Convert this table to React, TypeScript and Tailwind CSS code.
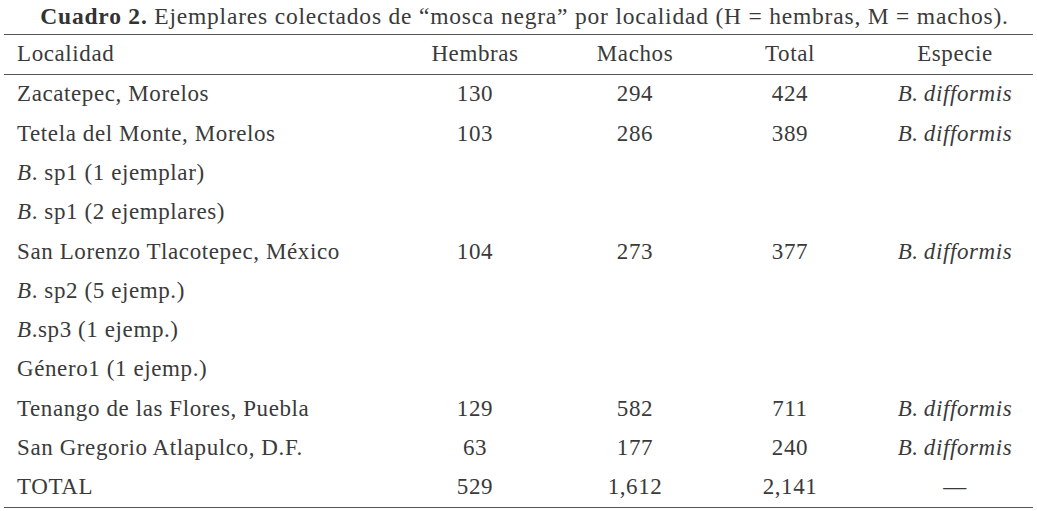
import React from 'react';

type Row = {
  loc: React.ReactNode;
  h?: string;
  m?: string;
  t?: string;
  sp?: React.ReactNode;
};

const Dif = () => <i>B.&thinsp;difformis</i>;

const rows: Row[] = [
  { loc: 'Zacatepec, Morelos', h: '130', m: '294', t: '424', sp: <Dif /> },
  { loc: 'Tetela del Monte, Morelos', h: '103', m: '286', t: '389', sp: <Dif /> },
  { loc: <><i>B</i>. sp1 (1 ejemplar)</> },
  { loc: <><i>B</i>. sp1 (2 ejemplares)</> },
  { loc: 'San Lorenzo Tlacotepec, México', h: '104', m: '273', t: '377', sp: <Dif /> },
  { loc: <><i>B</i>. sp2 (5 ejemp.)</> },
  { loc: <><i>B</i>.sp3 (1 ejemp.)</> },
  { loc: 'Género1 (1 ejemp.)' },
  { loc: 'Tenango de las Flores, Puebla', h: '129', m: '582', t: '711', sp: <Dif /> },
  { loc: 'San Gregorio Atlapulco, D.F.', h: '63', m: '177', t: '240', sp: <Dif /> },
  { loc: 'TOTAL', h: '529', m: '1,612', t: '2,141', sp: '—' },
];

const cols = 'grid grid-cols-[379px_184px_136px_174px_156px] items-center';

export default function App() {
  return (
    <div className="w-[1037px] h-[511px] bg-white text-[#3a3a3a] font-[family-name:'Liberation_Serif',serif] text-[23px] tracking-[0.6px] overflow-hidden">
      <div className="h-[34px] flex items-center justify-center pl-[12px] leading-none text-[23.5px] tracking-[0.8px] whitespace-nowrap">
        <span>
          <b className="text-[#333]">Cuadro 2.</b> Ejemplares colectados de “mosca negra” por localidad (H = hembras, M = machos).
        </span>
      </div>
      <div className="mx-[4px] w-[1029px] border-t border-b border-[#555]">
        <div className={`${cols} h-[40px] border-b border-[#555]`}>
          <div className="pl-[13px]">Localidad</div>
          <div className="text-center">Hembras</div>
          <div className="text-center">Machos</div>
          <div className="text-center">Total</div>
          <div className="text-center">Especie</div>
        </div>
        {rows.map((r, i) => (
          <div key={i} className={`${cols} h-[39.3px]`}>
            <div className="pl-[13px] whitespace-nowrap">{r.loc}</div>
            <div className="text-center">{r.h}</div>
            <div className="text-center">{r.m}</div>
            <div className="text-center">{r.t}</div>
            <div className="text-center">{r.sp}</div>
          </div>
        ))}
      </div>
    </div>
  );
}
